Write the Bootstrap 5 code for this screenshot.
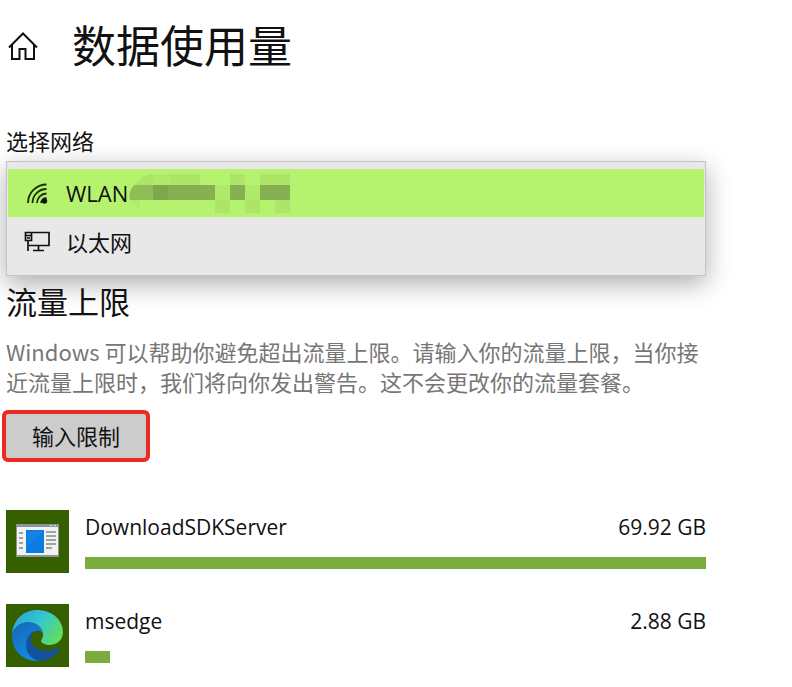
<!DOCTYPE html>
<html lang="zh-CN">
<head>
<meta charset="utf-8">
<meta name="viewport" content="width=device-width, initial-scale=1">
<title>数据使用量</title>
<link href="https://cdn.jsdelivr.net/npm/bootstrap@5.3.0/dist/css/bootstrap.min.css" rel="stylesheet">
<style>
body{font-family:"Open Sans","Noto Sans CJK SC",sans-serif;font-size:22px;line-height:30px;color:#111;background:#fff}
.usage-page{max-width:712px;padding:16px 6px}
.home-link{width:34px;margin-right:32px;color:#111}
.page-title{font-size:44px;line-height:60px;font-weight:400}
.net-label{margin-top:50px;margin-bottom:5px}
.net-menu{background:#e8e8e8;border:1px solid #c3c3c6;padding:7px 1px 9px;box-shadow:0 8px 24px rgba(0,0,0,.32)}
.net-option{border:0;background:transparent;color:#111;height:48px;padding:0 16px;text-align:left}
.net-option.chosen{background:#b5f36e}
.net-option + .net-option{margin-top:1px}
.net-icon{width:42px}
.sub-title{font-size:31px;line-height:40px;font-weight:400;margin-top:6px;margin-bottom:14px}
.hint{font-family:"Noto Sans CJK SC",sans-serif;color:#767676;margin-bottom:14px}
.limit-btn{width:148px;height:52px;margin-left:-4px;background:#ccc;border:4px solid #ee2a20;border-radius:6px;color:#111}
.app-list{margin-top:48px}
.app-row{margin-bottom:31px;gap:16px}
.app-info{padding-top:2px;font-size:21px}
.usage-track{height:12px;margin-top:15px}
.usage-fill{height:12px;background:#7aac3e}
</style>
<script src="https://cdn.jsdelivr.net/npm/bootstrap@5.3.0/dist/js/bootstrap.bundle.min.js" defer></script>
</head>
<body>
<main class="usage-page">
<header class="d-flex align-items-center">
<a class="home-link d-block" href="#" aria-label="主页"><svg class="d-block" width="34" height="30" viewBox="0 0 34 30" fill="none" stroke="#111" stroke-width="2"><path d="M3 16.500 17 2.500l14 14M6 14v14h7.500v-10h6v10H28V14"/></svg></a>
<h1 class="page-title mb-0">数据使用量</h1>
</header>
<div class="net-label" id="netLabel">选择网络</div>
<div class="net-menu" role="listbox" aria-labelledby="netLabel">
<button type="button" role="option" aria-selected="true" class="net-option chosen d-flex align-items-center w-100">
<span class="net-icon"><svg class="d-block" width="28" height="28" viewBox="0 0 28 28" fill="none" stroke="#1a3000" stroke-width="1.800"><path d="M4 24A18.500 18.500 0 0 1 22.500 5.500M8.500 24a14 14 0 0 1 14-14M13 24a9.500 9.500 0 0 1 9.500-9.500M17 24a5.500 5.500 0 0 1 5.500-5"/><circle cx="20.500" cy="22" r="2.700" fill="#111" stroke="none"/></svg></span>
<span>WLAN</span>
<svg width="162" height="40" viewBox="0 0 162 40" aria-hidden="true">
<path fill="#ace568" d="M25 1v11H7Q12 2 25 1zM42 1h30v11H42zM102 1h15v11h-15zM132 1h30v11h-30zM87 27h15v13H87zM117 27h15v13h-15zM147 27h15v13h-15z"/>
<path fill="#b0ea6b" d="M25 1h17v11H25zM3 27h9v8Q5 32 3 27zM87 12h15v15H87zM117 12h15v15h-15z"/>
<path fill="#8fbe58" d="M6 12h19v15H2Q0 18 6 12z"/>
<path fill="#7ea64c" d="M25 12h15v15H25z"/>
<path fill="#87b052" d="M40 12h47v15H40zM102 12h15v15h-15zM132 12h30v15h-30z"/></svg>
</button>
<button type="button" role="option" aria-selected="false" class="net-option d-flex align-items-center w-100">
<span class="net-icon"><svg class="d-block" width="28" height="24" viewBox="0 0 28 24" fill="none" stroke="#111" stroke-width="1.700"><path d="M8 2.500h17v13H5M1.500 2.500H7.500v8H1.500zM1.500 5.500h6M3 8h3M4 10.500V21M14.500 15.500V20M9 20.500h11"/></svg></span>
<span>以太网</span>
</button>
</div>
<h2 class="sub-title">流量上限</h2>
<p class="hint">Windows 可以帮助你避免超出流量上限。请输入你的流量上限，当你接近流量上限时，我们将向你发出警告。这不会更改你的流量套餐。</p>
<button type="button" class="limit-btn p-0">输入限制</button>
<section class="app-list">
<div class="app-row d-flex">
<svg class="flex-shrink-0" width="63" height="63" viewBox="0 0 63 63" aria-hidden="true"><path fill="#365f00" d="M0 0h63v63H0z"/><path fill="#8d959b" d="M10 14h43v33H10z"/><path fill="#f1f2f2" d="M11 17h41v28H11z"/><path fill="#d9dde0" d="M48 15h2v1h-2zM44 15h2v1h-2z"/><path fill="#0a7be0" d="M20 20h18v23H20z"/><path fill="#1583e6" d="M21 21h16L21 37z"/><path d="M13 23h4M13 28h4M13 33h4M13 38h4M40 22h10M40 26h10M40 30h10M40 34h10M40 38h6" stroke="#85898d" stroke-width="1.500"/></svg>
<div class="app-info flex-grow-1"><div class="d-flex justify-content-between"><span>DownloadSDKServer</span><span>69.92 GB</span></div><div class="usage-track"><div class="usage-fill" style="width:100%"></div></div></div></div>
<div class="app-row d-flex">
<svg class="flex-shrink-0" width="63" height="63" viewBox="0 0 63 63" aria-hidden="true">
<defs>
<linearGradient id="edgeTop" x1="0" y1="0.200" x2="1" y2="0.700"><stop offset="0" stop-color="#2aa5dc"/><stop offset=".5" stop-color="#37c6cf"/><stop offset="1" stop-color="#62df56"/></linearGradient>
<linearGradient id="edgeLeft" x1="0" y1="0" x2="0.500" y2="1"><stop offset="0" stop-color="#1667b5"/><stop offset="1" stop-color="#138be0"/></linearGradient>
</defs>
<path fill="#365f00" d="M0 0h63v63H0z"/>
<path fill="url(#edgeTop)" d="M6 29C8 15 18 6 31 6c15 0 26 10 26 22 0 8-6 13-14 13-5 0-8-2-8-4 0-2 2-3 2-6 0-7-7-12-16-12-7 0-12 4-15 10z"/>
<path fill="url(#edgeLeft)" d="M6 30c2-7 8-12 16-12 8 0 15 5 15 12-1-2-4-4-7-3-5 1-8 7-4 15l12 14c-2 1-5 1-7 1C16 57 5 45 6 30z"/>
<path fill="#1452a0" d="M27 28c-3 4-3 9 0 13 4 6 14 8 24 3 2-1 3 0 2 2-4 6-10 10-17 11-9 0-16-7-16-16 0-6 3-11 7-13z"/>
<path fill="#365f00" d="M37 30c-2-4-8-4-10 0-2 4-1 8 2 11 3 3 8 4 12 3l3-3c-5 0-9-2-9-4 0-2 2-3 2-7z"/>
</svg>
<div class="app-info flex-grow-1"><div class="d-flex justify-content-between"><span>msedge</span><span>2.88 GB</span></div><div class="usage-track"><div class="usage-fill" style="width:4%"></div></div></div></div>
</section>
</main>
</body>
</html>
